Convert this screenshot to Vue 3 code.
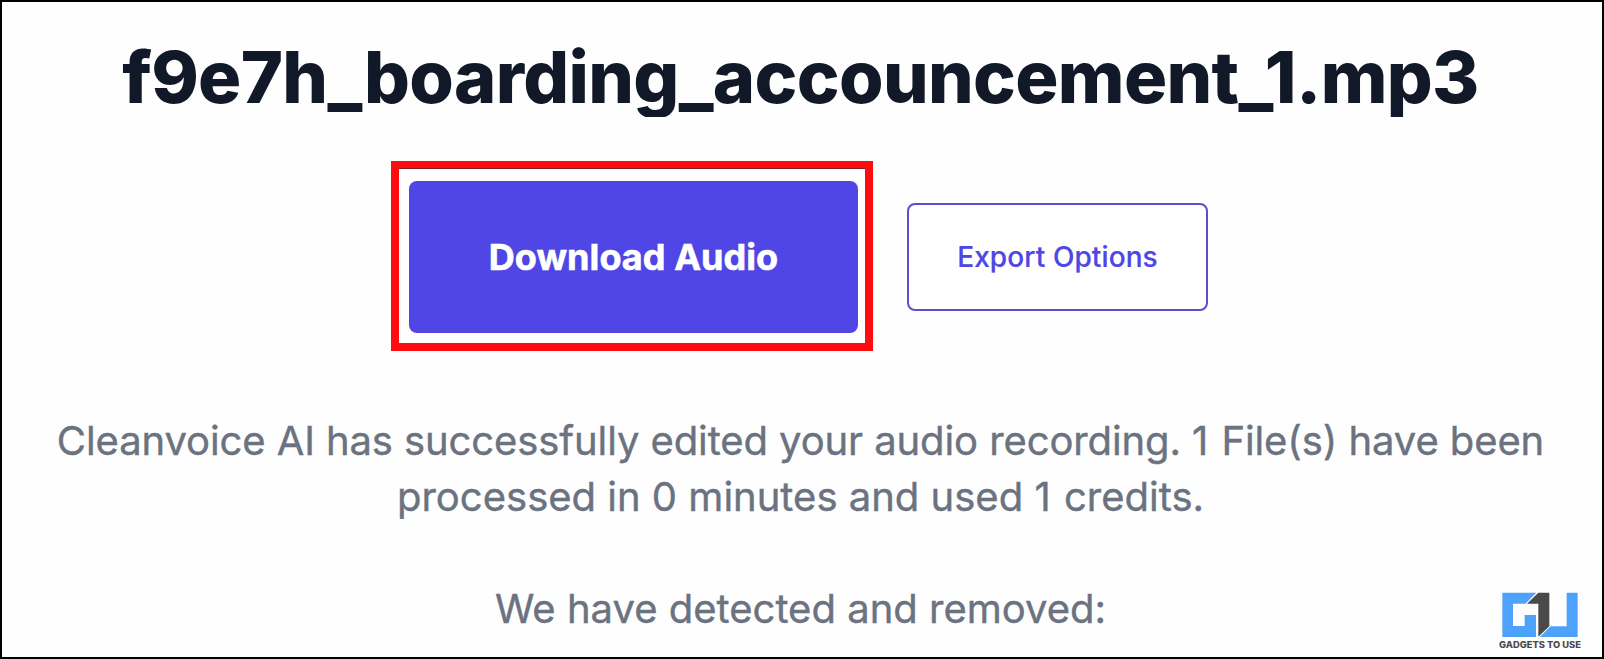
<template>
  <main class="page">
    <h1 class="file-name">{{ fileName }}</h1>

    <div class="actions">
      <div class="highlight">
        <button class="btn btn-primary">Download Audio</button>
      </div>
      <button class="btn btn-outline">Export Options</button>
    </div>

    <div class="summary">
      <p class="result">
        Cleanvoice AI has successfully edited your audio recording. <span class="count">{{ files }}</span> File(s) have been
      </p>
      <p>processed in {{ minutes }} minutes and used <span class="count">{{ credits }}</span> credits.</p>
      <p class="detected">We have detected and removed:</p>
    </div>

    <svg class="watermark" viewBox="0 0 252 174" width="84" height="58">
      <path fill="#4da3fc" d="M13 2H115L82 35H45V102H80V69H114V135H13Z" />
      <path fill="#4b494a" d="M121 2H154V103L121 134V35H87Z" />
      <path fill="#4da3fc" d="M206 2H239V135H125L158 103H206Z" />
      <text x="3" y="168" textLength="246" lengthAdjust="spacingAndGlyphs">GADGETS TO USE</text>
    </svg>
  </main>
</template>

<script setup>
const fileName = 'f9e7h_boarding_accouncement_1.mp3'
const files = 1
const minutes = 0
const credits = 1
</script>

<style>
body {
  margin: 0;
}
</style>

<style scoped>
.page {
  position: relative;
  box-sizing: border-box;
  width: 100%;
  height: 659px;
  padding-top: 38px;
  border: 2px solid #000;
  background-color: #fefefe;
  font-family: Inter, "Liberation Sans", sans-serif;
  text-align: center;
  overflow: hidden;
}

/* the line box is tight, so the descenders end at its bottom edge */
.file-name {
  height: 77px;
  margin: 0;
  padding-right: 3px;
  color: #111827;
  font-size: 72px;
  font-weight: 800;
  line-height: 73px;
  letter-spacing: -0.66px;
  white-space: nowrap;
  overflow: hidden;
}

.actions {
  display: flex;
  align-items: center;
  justify-content: center;
  gap: 34px;
  margin-top: 44px;
  padding-right: 5px;
}

.highlight {
  box-sizing: border-box;
  width: 482px;
  height: 190px;
  padding: 13px 7px 10px 10px;
  border: 8px solid #fd0d0f;
  border-top-width: 7px;
  box-shadow: inset 0 1px 0 #8d1a22;
}

.btn {
  display: block;
  box-sizing: border-box;
  padding: 0;
  border-radius: 8px;
  font-family: inherit;
  white-space: nowrap;
  cursor: pointer;
}

.btn-primary {
  width: 100%;
  height: 100%;
  border: none;
  background-color: #4f46e5;
  color: #fff;
  font-size: 36px;
  font-weight: 700;
  letter-spacing: 0.05px;
  -webkit-text-stroke: 0.6px #fff;
}

.btn-outline {
  width: 301px;
  height: 108px;
  margin-top: 2px;
  border: 2px solid #5a4fcf;
  background-color: #fff;
  color: #4f46e5;
  font-size: 28px;
  font-weight: 500;
  letter-spacing: 0.1px;
  -webkit-text-stroke: 0.2px #4f46e5;
}

.summary {
  margin-top: 62px;
  padding-right: 3px;
  color: #6b7280;
  font-size: 40px;
  line-height: 56px;
  white-space: nowrap;
  -webkit-text-stroke: 0.4px #6b7280;
}

.summary p {
  margin: 0;
}

.summary .result {
  letter-spacing: -0.1px;
}

.summary .count {
  margin-right: 2px;
}

.summary .detected {
  margin-top: 56px;
}

.watermark {
  position: absolute;
  right: 20px;
  bottom: 7px;
  overflow: visible;
}

.watermark text {
  fill: #4b494a;
  font-size: 27px;
  font-weight: 800;
}
</style>
